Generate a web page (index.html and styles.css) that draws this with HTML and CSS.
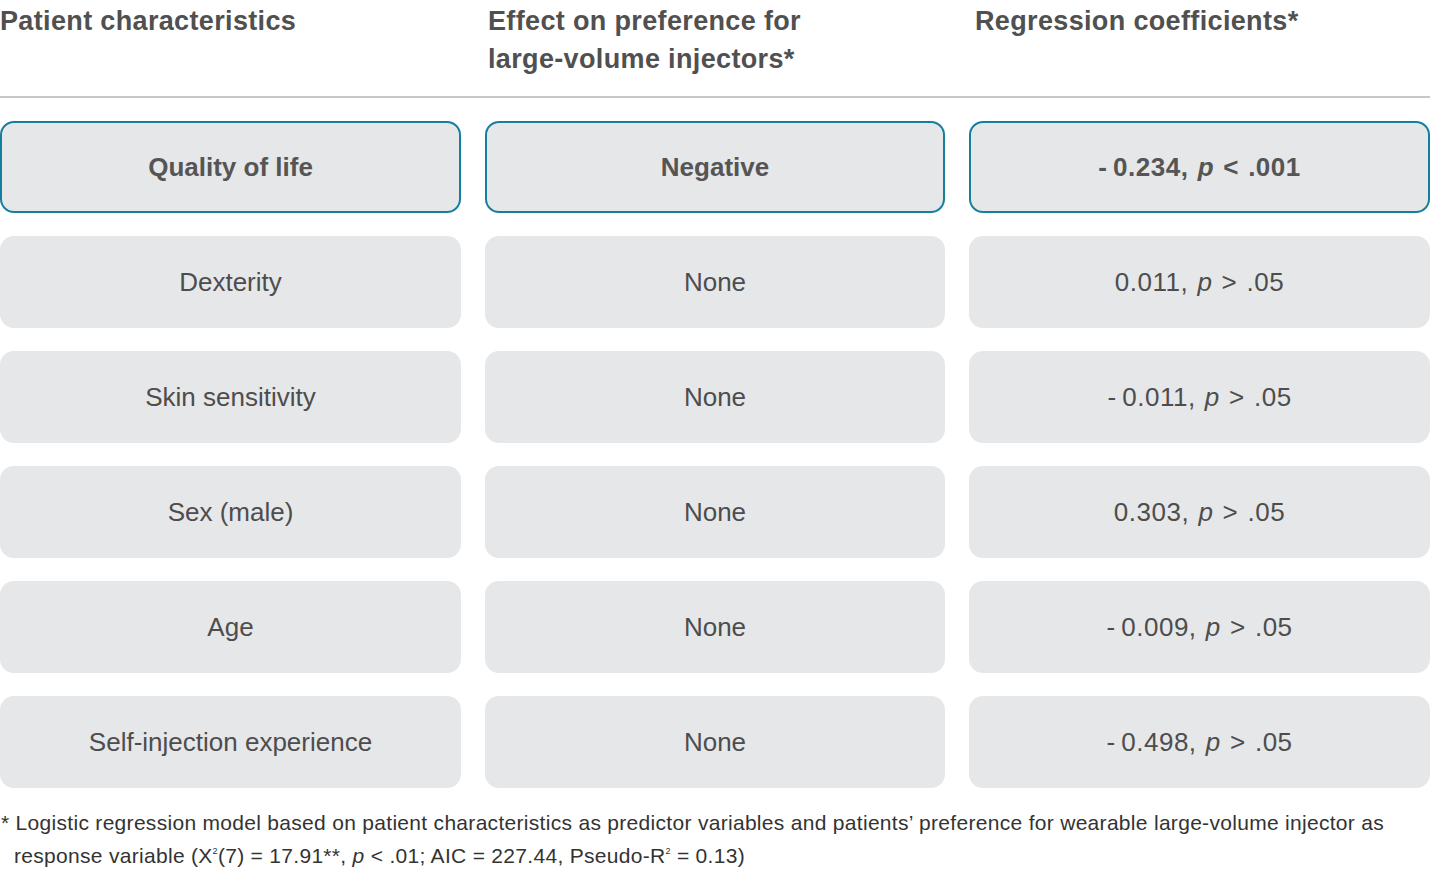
FILE: index.html
```html
<!DOCTYPE html>
<html lang="en">
<head>
<meta charset="utf-8">
<title>Patient characteristics</title>
<link rel="stylesheet" href="styles.css">
</head>
<body>
<div class="page">
  <div class="head">
    <div class="hcell">Patient characteristics</div>
    <div class="hcell h2">Effect on preference for<br>large-volume injectors*</div>
    <div class="hcell h3">Regression coefficients*</div>
  </div>
  <div class="rows">
    <div class="cell hl"><span>Quality of life</span></div>
    <div class="cell hl"><span>Negative</span></div>
    <div class="cell hl val"><span>-&thinsp;0.234, <i>p</i> &lt; .001</span></div>

    <div class="cell"><span>Dexterity</span></div>
    <div class="cell"><span>None</span></div>
    <div class="cell val"><span>0.011, <i>p</i> &gt; .05</span></div>

    <div class="cell"><span>Skin sensitivity</span></div>
    <div class="cell"><span>None</span></div>
    <div class="cell val"><span>-&thinsp;0.011, <i>p</i> &gt; .05</span></div>

    <div class="cell"><span>Sex (male)</span></div>
    <div class="cell"><span>None</span></div>
    <div class="cell val"><span>0.303, <i>p</i> &gt; .05</span></div>

    <div class="cell"><span>Age</span></div>
    <div class="cell"><span>None</span></div>
    <div class="cell val"><span>-&thinsp;0.009, <i>p</i> &gt; .05</span></div>

    <div class="cell"><span>Self-injection experience</span></div>
    <div class="cell"><span>None</span></div>
    <div class="cell val"><span>-&thinsp;0.498, <i>p</i> &gt; .05</span></div>
  </div>
  <p class="note">* Logistic regression model based on patient characteristics as predictor variables and patients’ preference for wearable large-volume injector as<br>response variable (X<sup>2</sup>(7) = 17.91**, <i>p</i> &lt; .01; AIC = 227.44, Pseudo-R<sup>2</sup> = 0.13)</p>
</div>
</body>
</html>
```

FILE: styles.css
```css
html, body {
  margin: 0;
  padding: 0;
  background: #ffffff;
}
body {
  font-family: "Liberation Sans", Arial, sans-serif;
  color: #4a4a4a;
  width: 1430px;
  height: 878px;
  overflow: hidden;
}
.page {
  display: flex;
  flex-direction: column;
}
.head {
  display: grid;
  grid-template-columns: 461px 460px 461px;
  column-gap: 24px;
  padding-top: 2px;
  padding-bottom: 18px;
  border-bottom: 2px solid #c8c8c8;
}
.hcell {
  font-size: 27px;
  font-weight: bold;
  line-height: 38px;
  letter-spacing: 0.35px;
  color: #505050;
}
.h2 { padding-left: 3px; }
.h3 { padding-left: 6px; }
.rows {
  display: grid;
  grid-template-columns: 461px 460px 461px;
  grid-auto-rows: 92px;
  column-gap: 24px;
  row-gap: 23px;
  margin-top: 23px;
}
.cell {
  background: #e6e7e9;
  border-radius: 14px;
  display: flex;
  align-items: center;
  justify-content: center;
  font-size: 26px;
  color: #4d4d4d;
  box-sizing: border-box;
}
.cell.hl {
  border: 2.5px solid #157f9e;
  font-weight: bold;
  color: #555555;
}
.cell.val {
  word-spacing: 1.5px;
  letter-spacing: 0.5px;
}
.note {
  margin: 18px 0 0 0;
  padding-left: 14px;
  text-indent: -13px;
  font-size: 21px;
  line-height: 33px;
  color: #333333;
  letter-spacing: 0.3px;
  white-space: nowrap;
}
.note sup {
  font-size: 9px;
  line-height: 0;
  vertical-align: 9px;
}
```
